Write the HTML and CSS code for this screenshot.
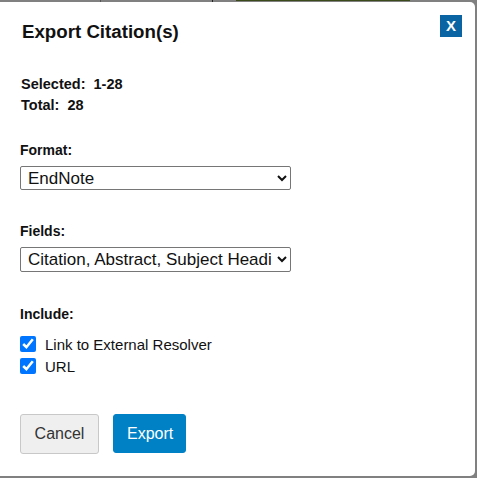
FILE: index.html
```html
<!DOCTYPE html>
<html>
<head>
<meta charset="utf-8">
<link rel="stylesheet" href="styles.css">
</head>
<body>
<div class="backdrop-strip">
  <span class="strip-a"></span>
  <span class="strip-b"></span>
  <span class="strip-green"></span>
</div>
<div class="dialog">
  <div class="header">
    <h1 class="title">Export Citation(s)</h1>
    <button class="close" type="button">X</button>
  </div>
  <div class="summary">
    <div>Selected:&nbsp; 1-28</div>
    <div>Total:&nbsp; 28</div>
  </div>
  <div class="group">
    <div class="label">Format:</div>
    <select class="select">
      <option>EndNote</option>
    </select>
  </div>
  <div class="group fields">
    <div class="label">Fields:</div>
    <select class="select">
      <option>Citation, Abstract, Subject Headings</option>
    </select>
  </div>
  <div class="group include">
    <div class="label">Include:</div>
    <label class="check"><input type="checkbox" checked><span>Link to External Resolver</span></label>
    <label class="check"><input type="checkbox" checked><span>URL</span></label>
  </div>
  <div class="actions">
    <button class="btn cancel" type="button">Cancel</button>
    <button class="btn export" type="button">Export</button>
  </div>
</div>
</body>
</html>
```
FILE: styles.css
```css
html, body {
  margin: 0;
  padding: 0;
  background: #808080;
  width: 477px;
  height: 478px;
  overflow: hidden;
  font-family: "Liberation Sans", Arial, sans-serif;
  color: #111;
}
.backdrop-strip {
  height: 2px;
  display: flex;
  position: relative;
}
.strip-a { position: absolute; left: 100px; top: 0; width: 1px; height: 2px; background: #555; }
.strip-b { position: absolute; left: 212px; top: 0; width: 1px; height: 2px; background: #222; }
.strip-green { position: absolute; left: 236px; top: 0; width: 174px; height: 1px; background: #3a4a1a; }
.dialog {
  width: 475px;
  height: 474px;
  background: #fff;
  border-radius: 0 5px 5px 0;
  box-sizing: border-box;
  padding: 0 0 0 20px;
}
.header {
  display: flex;
  justify-content: space-between;
  align-items: flex-start;
  padding-top: 13px;
  padding-right: 13px;
}
.title {
  margin: 6px 0 0 2px;
  font-size: 18.7px;
  font-weight: bold;
  color: #111;
}
.close {
  width: 22px;
  height: 22px;
  padding: 0;
  border: none;
  background: #0a64a4;
  color: #fff;
  font-family: "Liberation Sans", Arial, sans-serif;
  font-weight: bold;
  font-size: 15px;
  line-height: 22px;
}
.summary {
  margin-top: 31px;
  font-size: 14.5px;
  font-weight: bold;
  line-height: 21px;
  padding-left: 1px;
}
.group {
  margin-top: 25px;
}
.label {
  font-size: 14px;
  font-weight: bold;
  line-height: 18px;
  margin-bottom: 7px;
}
.select {
  width: 271px;
  height: 24px;
  font-family: "Liberation Sans", Arial, sans-serif;
  font-size: 17px;
  color: #111;
  border: 1px solid #767676;
  border-radius: 2px;
  background: #fff;
  padding: 0 3px;
  margin: 0;
  display: block;
}
.fields { margin-top: 32px; }
.fields .select { height: 25px; }
.include { margin-top: 33px; }
.include .label { margin-bottom: 10px; }
.check {
  display: flex;
  align-items: center;
  font-size: 15px;
  height: 22px;
  color: #111;
}
.check input {
  width: 16px;
  height: 16px;
  margin: 0 9px 0 0;
  accent-color: #0075ff;
}
.actions {
  margin-top: 37px;
  display: flex;
  gap: 14px;
}
.btn {
  font-family: "Liberation Sans", Arial, sans-serif;
  font-size: 16px;
  height: 40px;
  border-radius: 3px;
  padding: 0 13px;
}
.cancel {
  background: #efefef;
  border: 1px solid #c8c8c8;
  color: #333;
  width: 79px;
}
.export {
  background: #0081c6;
  border: 1px solid #0081c6;
  color: #fff;
  width: 73px;
  height: 39px;
}
```
